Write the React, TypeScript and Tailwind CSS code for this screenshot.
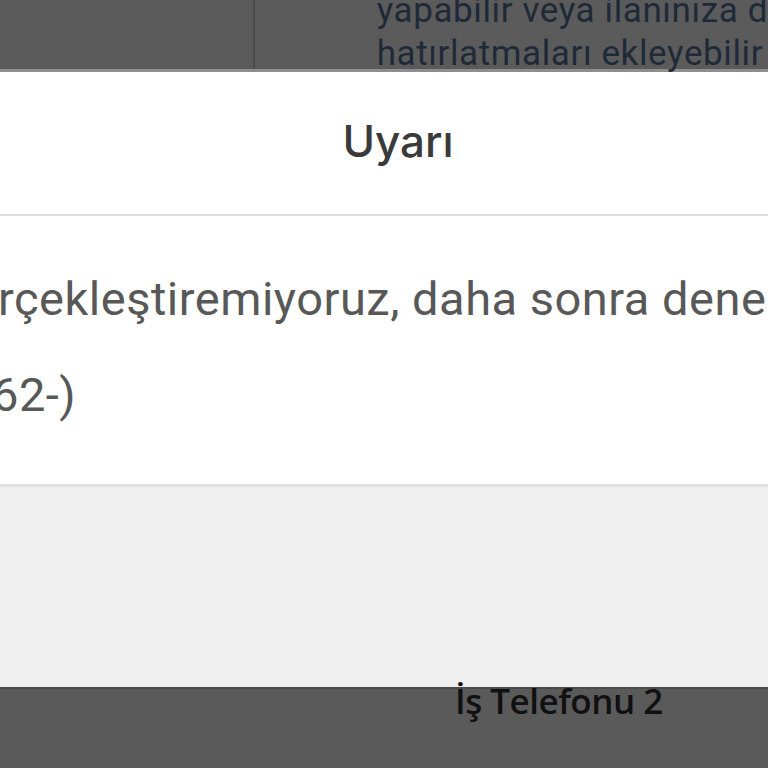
import React from "react";

export default function App() {
  return (
    <div className="relative h-[768px] w-[768px] overflow-hidden bg-[#f0f0f0]" style={{ fontFamily: "Roboto, 'Noto Sans', sans-serif" }}>
      {/* top dimmed background */}
      <div className="flex h-[72px] bg-[#5b5b5b] border-b-[3px] border-[#8e8e8e]">
        <div className="w-[255px] border-r-2 border-[#4c4c4c]" />
        <div className="flex flex-col pl-[122px] text-[35px] leading-[46px] text-[#1f2a38] tracking-[0.6px] whitespace-nowrap">
          <span className="-mt-[12px]">yapabilir veya ilanınıza d</span>
          <span className="-mt-[3px]">hatırlatmaları ekleyebilir</span>
        </div>
      </div>
      {/* modal */}
      <div className="bg-white">
        <div className="flex h-[144px] items-start justify-center pt-[36px] border-b-2 border-[#dedede]">
          <span className="text-[44px] font-medium text-[#3a3a3a] ml-[28px]" style={{ fontFamily: "Inter, Roboto, sans-serif" }}>Uyarı</span>
        </div>
        <div className="flex h-[271px] flex-col whitespace-nowrap text-[47px] leading-[56px] tracking-[0.5px] text-[#585858] border-b-[3px] border-[#e2e2e2]">
          <span className="mt-[55px] -ml-[2px]">rçekleştiremiyoruz, daha sonra dene</span>
          <span className="mt-[40px] -ml-[8px]">62-)</span>
        </div>
      </div>
      <div className="h-[200px] bg-[#f0f0f0]" />
      <div className="flex h-[81px] border-t-2 border-[#4a4a4a] bg-[#5a5a5a]">
        <span className="ml-[455px] -mt-[6px] text-[35px] leading-[35px] font-semibold tracking-[-0.5px] text-[#111111]" style={{ fontFamily: "'Open Sans', sans-serif" }}>İş Telefonu 2</span>
      </div>
    </div>
  );
}
